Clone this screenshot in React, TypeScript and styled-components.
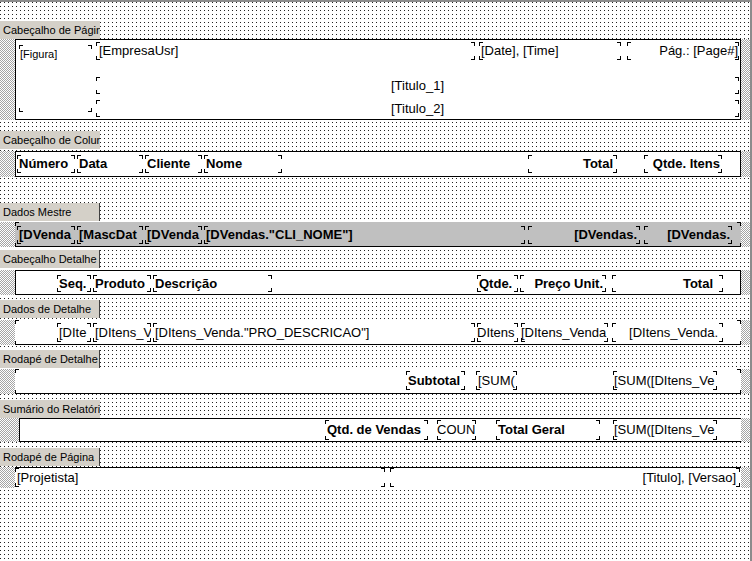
import styled, { createGlobalStyle } from 'styled-components'

type FieldDef = {
  x: number
  y: number
  w: number
  h: number
  t?: string
  b?: boolean
  a?: 'left' | 'right' | 'center'
  pad?: string
  size?: number
  lh?: number
}

type BandDef = {
  label: string
  open?: boolean
  gap: number
  top: number
  height: number
  inset?: number
  edges: string
  fill?: string
  fields: FieldDef[]
}

const GlobalStyle = createGlobalStyle`
  html, body {
    margin: 0;
    padding: 0;
    background: #fff;
  }
  body {
    font-family: "Liberation Sans", Arial, sans-serif;
  }
`

const Page = styled.div`
  width: 752px;
  height: 561px;
  box-sizing: border-box;
  border-top: 2px solid #8c8c8c;
  border-right: 2px solid #8c8c8c;
  background-color: #fff;
  background-image: conic-gradient(at 1px 1px, transparent 75%, #222 0);
  background-size: 4px 4px;
  overflow: hidden;
  display: flex;
  flex-direction: column;
`

const Band = styled.section<{ $gap: number }>`
  margin-top: ${p => p.$gap}px;
`

const BandTab = styled.div<{ $open?: boolean }>`
  width: 100px;
  height: 18px;
  box-sizing: border-box;
  padding-left: 3px;
  background: #d4d0c8;
  border-right: ${p => (p.$open ? 'none' : '1px solid #404040')};
  font-size: 11px;
  line-height: 18px;
  color: #000;
  white-space: nowrap;
  overflow: hidden;
`

const BandRow = styled.div<{ $inset: number; $top: number; $height: number }>`
  display: grid;
  grid-template-columns: ${p => p.$inset}px ${p => 741 - p.$inset}px 1fr;
  height: ${p => p.$height}px;
  margin-top: ${p => p.$top}px;
`

const Hatch = styled.div`
  background: repeating-conic-gradient(#a4a4a4 0 25%, #fff 0 50%) 0 0 / 2px 2px;
`

const edgeShadow: Record<string, string> = {
  t: 'inset 0 1px 0 #000',
  b: 'inset 0 -1px 0 #000',
  l: 'inset 1px 0 0 #000',
  r: 'inset -1px 0 0 #000',
}

const BandBody = styled.div<{ $edges: string; $fill?: string }>`
  position: relative;
  background: ${p => p.$fill ?? '#fff'};
  box-shadow: ${p => p.$edges.split('').map(e => edgeShadow[e]).join(', ') || 'none'};
`

const mark = 'linear-gradient(#000, #000)'

// report object on the band canvas, with the designer's corner marks
const Field = styled.div<{
  $x: number
  $y: number
  $w: number
  $h: number
  $bold?: boolean
  $align?: string
  $pad?: string
  $size?: number
  $lh?: number
}>`
  position: absolute;
  left: ${p => p.$x}px;
  top: ${p => p.$y}px;
  width: ${p => p.$w}px;
  height: ${p => p.$h}px;
  box-sizing: border-box;
  padding: ${p => p.$pad ?? '0 2px'};
  font-size: ${p => p.$size ?? 13}px;
  font-weight: ${p => (p.$bold ? 700 : 400)};
  line-height: ${p => p.$lh ?? p.$h}px;
  text-align: ${p => p.$align ?? 'left'};
  color: #000;
  white-space: nowrap;
  overflow: hidden;
  background-image: ${[mark, mark, mark, mark, mark, mark, mark, mark].join(', ')};
  background-repeat: no-repeat;
  background-size: 4px 1px, 1px 4px, 4px 1px, 1px 4px, 4px 1px, 1px 4px, 4px 1px, 1px 4px;
  background-position: left top, left top, right top, right top, left bottom, left bottom, right bottom, right bottom;
`

const bands: BandDef[] = [
  {
    label: 'Cabeçalho de Página', open: true, gap: 19, top: 0, height: 81, edges: 'tlrb',
    fields: [
      { x: 4, y: 6, w: 73, h: 67, t: '[Figura]', size: 11, lh: 18, pad: '0 1px' },
      { x: 81, y: 3, w: 379, h: 18, t: '[EmpresaUsr]', pad: '0 3px' },
      { x: 464, y: 3, w: 142, h: 18, t: '[Date], [Time]' },
      { x: 612, y: 3, w: 112, h: 18, t: 'Pág.: [Page#]', a: 'right', pad: '0 1px' },
      { x: 81, y: 38, w: 643, h: 17, t: '[Titulo_1]', a: 'center' },
      { x: 81, y: 61, w: 643, h: 17, t: '[Titulo_2]', a: 'center' },
    ],
  },
  {
    label: 'Cabeçalho de Coluna', open: true, gap: 11, top: 2, height: 26, edges: 'tlrb',
    fields: [
      { x: 2, y: 4, w: 58, h: 18, t: 'Número', b: true },
      { x: 62, y: 4, w: 66, h: 18, t: 'Data', b: true },
      { x: 130, y: 4, w: 57, h: 18, t: 'Cliente', b: true },
      { x: 189, y: 4, w: 78, h: 18, t: 'Nome', b: true },
      { x: 513, y: 4, w: 89, h: 18, t: 'Total', b: true, a: 'right', pad: '0 4px' },
      { x: 629, y: 4, w: 78, h: 18, t: 'Qtde. Itens', b: true, a: 'right' },
    ],
  },
  {
    label: 'Dados Mestre', gap: 26, top: 1, height: 25, edges: 'b', fill: '#c0c0c0',
    fields: [
      { x: 0, y: 0, w: 726, h: 25 },
      { x: 2, y: 4, w: 58, h: 18, t: '[DVenda', b: true },
      { x: 62, y: 4, w: 66, h: 18, t: '[MascDat', b: true },
      { x: 130, y: 4, w: 57, h: 18, t: '[DVenda', b: true },
      { x: 189, y: 4, w: 321, h: 18, t: '[DVendas."CLI_NOME"]', b: true },
      { x: 513, y: 4, w: 112, h: 18, t: '[DVendas.', b: true, a: 'right', pad: '0 3px' },
      { x: 629, y: 4, w: 88, h: 18, t: '[DVendas.', b: true, a: 'right' },
    ],
  },
  {
    label: 'Cabeçalho Detalhe', gap: 3, top: 2, height: 25, edges: 'tlrb',
    fields: [
      { x: 42, y: 5, w: 34, h: 17, t: 'Seq.', b: true },
      { x: 78, y: 5, w: 58, h: 17, t: 'Produto', b: true },
      { x: 138, y: 5, w: 119, h: 17, t: 'Descrição', b: true },
      { x: 462, y: 5, w: 41, h: 17, t: 'Qtde.', b: true },
      { x: 505, y: 5, w: 86, h: 17, t: 'Preço Unit.', b: true, a: 'right', pad: '0 3px' },
      { x: 597, y: 5, w: 111, h: 17, t: 'Total', b: true, a: 'right', pad: '0 10px' },
    ],
  },
  {
    label: 'Dados de Detalhe', gap: 5, top: 2, height: 25, edges: 'b',
    fields: [
      { x: 0, y: 0, w: 726, h: 25 },
      { x: 42, y: 3, w: 34, h: 19, t: '[DIte' },
      { x: 78, y: 3, w: 58, h: 19, t: '[DItens_V' },
      { x: 138, y: 3, w: 322, h: 19, t: '[DItens_Venda."PRO_DESCRICAO"]' },
      { x: 462, y: 3, w: 41, h: 19, t: 'DItens', pad: '0' },
      { x: 506, y: 3, w: 87, h: 19, t: '[DItens_Venda', pad: '0' },
      { x: 597, y: 3, w: 111, h: 19, t: '[DItens_Venda.', a: 'right', pad: '0 5px' },
    ],
  },
  {
    label: 'Rodapé de Detalhe', gap: 5, top: 1, height: 25, edges: 'b',
    fields: [
      { x: 0, y: 0, w: 726, h: 25 },
      { x: 391, y: 2, w: 59, h: 19, t: 'Subtotal', b: true },
      { x: 461, y: 2, w: 41, h: 19, t: '[SUM(' },
      { x: 598, y: 2, w: 104, h: 19, t: '[SUM([DItens_Ve', pad: '0 1px' },
    ],
  },
  {
    label: 'Sumário do Relatório', open: true, gap: 6, top: 0, height: 24, inset: 19, edges: 'tlb',
    fields: [
      { x: 306, y: 2, w: 103, h: 20, t: 'Qtd. de Vendas', b: true },
      { x: 418, y: 2, w: 39, h: 20, t: 'COUN', pad: '0' },
      { x: 477, y: 2, w: 104, h: 20, t: 'Total Geral', b: true },
      { x: 594, y: 2, w: 104, h: 20, t: '[SUM([DItens_Ve', pad: '0 1px' },
    ],
  },
  {
    label: 'Rodapé de Página', gap: 6, top: 1, height: 21, edges: 't',
    fields: [
      { x: 0, y: 1, w: 370, h: 19, t: '[Projetista]' },
      { x: 375, y: 1, w: 350, h: 19, t: '[Titulo], [Versao]', a: 'right', pad: '0 4px' },
    ],
  },
]

function App() {
  return (
    <Page>
      <GlobalStyle />
      {bands.map(band => (
        <Band key={band.label} $gap={band.gap}>
          <BandTab $open={band.open}>{band.label}</BandTab>
          <BandRow $inset={band.inset ?? 15} $top={band.top} $height={band.height}>
            <Hatch />
            <BandBody $edges={band.edges} $fill={band.fill}>
              {band.fields.map((f, i) => (
                <Field
                  key={i}
                  $x={f.x}
                  $y={f.y}
                  $w={f.w}
                  $h={f.h}
                  $bold={f.b}
                  $align={f.a}
                  $pad={f.pad}
                  $size={f.size}
                  $lh={f.lh}
                >
                  {f.t}
                </Field>
              ))}
            </BandBody>
            <Hatch />
          </BandRow>
        </Band>
      ))}
    </Page>
  )
}

export default App
